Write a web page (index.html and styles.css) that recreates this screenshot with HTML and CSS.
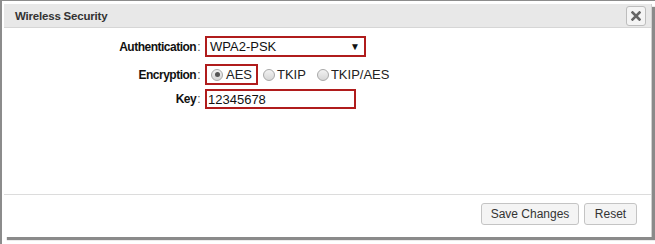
FILE: index.html
```html
<!DOCTYPE html>
<html lang="en">
<head>
    <meta charset="UTF-8">
    <title>Wireless Security</title>
    <link rel="stylesheet" href="styles.css">
</head>
<body>

    <!-- Wireless Security Dialog -->
    <div class="frame">
        <div class="dialog">
            <div class="dialog-header">
                <span class="dialog-title">Wireless Security</span>
                <button class="close-btn" type="button">
                    <svg width="10" height="10" viewBox="0 0 10 10">
                        <path d="M1.5 1.5 L8.5 8.5 M8.5 1.5 L1.5 8.5" stroke="#666" stroke-width="2.6" stroke-linecap="square"/>
                    </svg>
                </button>
            </div>

            <form class="dialog-body">
                <div class="row row-auth">
                    <label class="field-label">Authentication<span class="colon">:</span></label>
                    <div class="select-box">
                        <span>WPA2-PSK</span>
                        <span class="arrow">&#9660;</span>
                    </div>
                </div>

                <div class="row row-enc">
                    <label class="field-label">Encryption<span class="colon">:</span></label>
                    <div class="radio-group">
                        <span class="radio-item selected"><span class="radio checked"></span>AES</span>
                        <span class="radio-item"><span class="radio"></span>TKIP</span>
                        <span class="radio-item"><span class="radio"></span>TKIP/AES</span>
                    </div>
                </div>

                <div class="row row-key">
                    <label class="field-label">Key<span class="colon">:</span></label>
                    <div class="key-box">12345678</div>
                </div>
            </form>

            <div class="dialog-footer">
                <button class="btn btn-save" type="button">Save Changes</button>
                <button class="btn btn-reset" type="button">Reset</button>
            </div>
        </div>
    </div>

</body>
</html>
```

FILE: styles.css
```css
/* Common Styles */
body {
    margin: 0;
    font-family: 'Liberation Sans', Arial, sans-serif;
    font-size: 13px;
    color: #222;
    background-color: #fff;
}

.frame {
    width: 655px;
    height: 244px;
    box-sizing: border-box;
    border-top: 1px solid #8c8c8c;
    border-left: 2px solid #8c8c8c;
    padding: 3px 0 0 2px;
    overflow: hidden;
}

.dialog {
    width: 647px;
    height: 233px;
    display: flex;
    flex-direction: column;
    background-color: #fff;
    border-right: 1px solid #d0d0d0;
    box-shadow: 3px 3px 1px #8a8a8a;
}

/* Header */
.dialog-header {
    height: 23px;
    display: flex;
    align-items: center;
    justify-content: space-between;
    background-color: #e8e8e8;
    border-bottom: 1px solid #d6d6d6;
    padding: 0 5px 0 11px;
}

.dialog-title {
    font-weight: bold;
    font-size: 11.5px;
    letter-spacing: -0.2px;
    color: #333;
}

.close-btn {
    width: 20px;
    height: 20px;
    padding: 0;
    display: flex;
    align-items: center;
    justify-content: center;
    background-color: #f4f4f4;
    border: 1px solid #bdbdbd;
    border-radius: 3px;
}

/* Body */
.dialog-body {
    flex: 1;
    padding-top: 8px;
    display: flex;
    flex-direction: column;
}

.row {
    display: flex;
    align-items: center;
}

.row-enc {
    margin-top: 7px;
}

.row-key {
    margin-top: 4px;
}

.field-label {
    width: 196px;
    text-align: right;
    font-weight: bold;
    font-size: 12px;
    letter-spacing: -0.5px;
    color: #111;
}

.colon {
    font-weight: normal;
    color: #555;
    margin-left: 1px;
}

.select-box {
    width: 161px;
    height: 21px;
    box-sizing: border-box;
    margin-left: 5px;
    border: 2px solid #b01c1c;
    display: flex;
    align-items: center;
    justify-content: space-between;
    padding: 0 4px 0 3px;
    color: #111;
}

.arrow {
    font-size: 10px;
    color: #111;
}

.radio-group {
    display: flex;
    align-items: center;
    margin-left: 5px;
}

.radio-item {
    display: flex;
    align-items: center;
    height: 21px;
    margin-left: 5px;
    margin-right: 6px;
    color: #222;
}

.radio-item .radio {
    margin-right: 2px;
}

.radio-item.selected {
    width: 53px;
    box-sizing: border-box;
    border: 2px solid #b01c1c;
    padding-left: 4px;
    margin: 0;
}

.radio-item.selected .radio {
    margin-right: 3px;
}

.radio {
    width: 12px;
    height: 12px;
    border-radius: 50%;
    border: 1px solid #a8a8a8;
    background: linear-gradient(#f2f2f2, #d6d6d6);
    box-sizing: border-box;
    position: relative;
}

.radio.checked::after {
    content: "";
    position: absolute;
    left: 2.5px;
    top: 2.5px;
    width: 5px;
    height: 5px;
    border-radius: 50%;
    background-color: #555;
}

.key-box {
    width: 151px;
    height: 20px;
    box-sizing: border-box;
    margin-left: 5px;
    border: 2px solid #b01c1c;
    display: flex;
    align-items: center;
    padding: 0 1px;
    color: #111;
}

/* Footer */
.dialog-footer {
    height: 43px;
    box-sizing: border-box;
    border-top: 1px solid #dcdcdc;
    display: flex;
    justify-content: flex-end;
    align-items: flex-start;
    gap: 5px;
    padding: 8px 14px 0 0;
}

.btn {
    height: 22px;
    padding: 0;
    font-family: 'Liberation Sans', Arial, sans-serif;
    font-size: 12px;
    color: #333;
    background-color: #f4f4f4;
    border: 1px solid #c4c4c4;
    border-radius: 3px;
}

.btn-save {
    width: 98px;
}

.btn-reset {
    width: 53px;
}
```
